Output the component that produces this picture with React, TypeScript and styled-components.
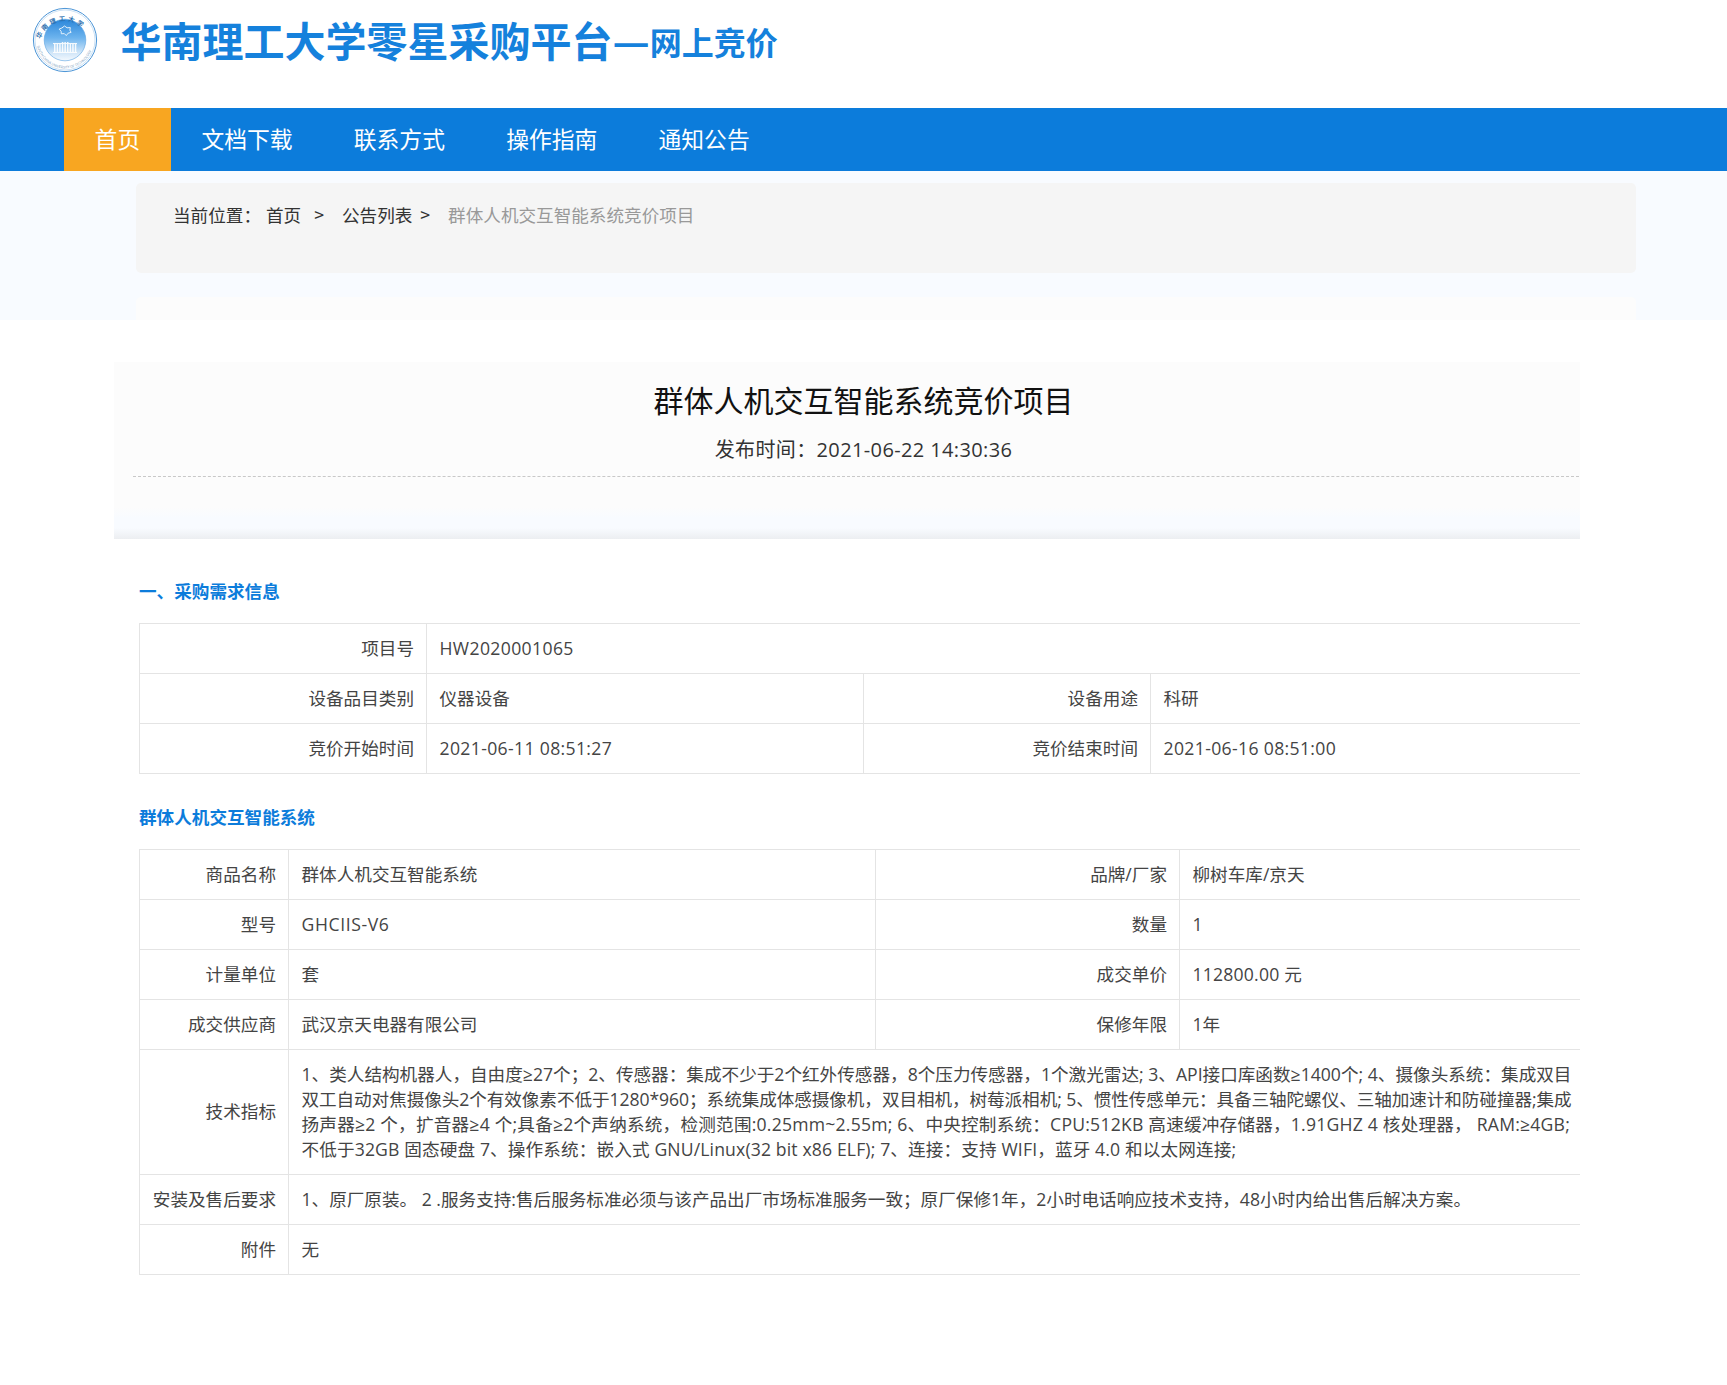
import React from 'react';
import styled, { createGlobalStyle } from 'styled-components';

const Global = createGlobalStyle`
  html, body { margin: 0; padding: 0; background: #fff; }
  body { font-family: "Noto Sans CJK SC", "Noto Sans", sans-serif; color: #333; }
  * { box-sizing: border-box; }
`;

const MIXED = `"Open Sans", "Noto Sans CJK SC", sans-serif`;

const Page = styled.div`
  width: 1727px;
  min-height: 1385px;
  overflow: hidden;
`;

const Header = styled.header`
  height: 108px;
  display: flex;
  align-items: flex-start;
  padding: 7px 0 0 31.5px;
`;

const Brand = styled.h1`
  margin: 9px 0 0 23px;
  display: flex;
  align-items: flex-end;
  height: 46px;
  font-size: 41px;
  line-height: 46px;
  font-weight: 700;
  color: #1581dc;
  white-space: nowrap;
`;

const BrandSub = styled.span`
  font-size: 32px;
  line-height: 42px;
  font-weight: 700;
`;

const Nav = styled.nav`
  height: 63px;
  background: #0c7cdb;
  display: flex;
  padding-left: 64px;
`;

const NavItem = styled.a<{ $active?: boolean }>`
  padding: 0 30.6px;
  line-height: 62px;
  font-size: 22.8px;
  color: #fff;
  background: ${(p) => (p.$active ? '#f8a621' : 'transparent')};
`;

const TopBand = styled.div`
  height: 149px;
  background: #f8fbff;
  padding: 12px 91px 0 136px;
  overflow: hidden;
`;

const Breadcrumb = styled.div`
  height: 90px;
  background: #f5f5f5;
  border-radius: 5px;
  padding: 19px 0 0 37px;
  font-size: 17.6px;
  line-height: 25px;
  color: #333;
  display: flex;
  white-space: nowrap;
`;

const Crumb = styled.span<{ $muted?: boolean }>`
  color: ${(p) => (p.$muted ? '#999' : '#333')};
`;

const Sep = styled.span<{ $left: number; $right: number }>`
  margin: 0 ${(p) => p.$right}px 0 ${(p) => p.$left}px;
`;

const GhostPanel = styled.div`
  height: 60px;
  margin-top: 24px;
  background: #fcfcfc;
  border-radius: 5px;
`;

const Main = styled.main`
  width: 1466px;
  margin: 42px 0 0 114px;
  overflow: hidden;
`;

const TitleBox = styled.section`
  height: 177px;
  padding: 17px 0 0 19px;
  background: linear-gradient(
    to bottom,
    #fcfcfc 0,
    #fcfcfc 145px,
    #f8fbff 156px,
    #f8fbff 166px,
    #eceef1 177px
  );
`;

const TitleInner = styled.div`
  width: 1461px;
  text-align: center;
  border-bottom: 1px dashed #c8c8c8;
  padding-bottom: 11px;
`;

const Title = styled.h2`
  margin: 0;
  font-size: 30px;
  line-height: 40px;
  font-weight: 400;
  color: #111;
`;

const Published = styled.div`
  margin-top: 16px;
  font-family: ${MIXED};
  font-size: 20px;
  line-height: 30px;
  letter-spacing: 0.37px;
  color: #333;
`;

const Body = styled.div`
  padding-left: 25px;
`;

const SectionHead = styled.h3<{ $top: number; $bottom: number }>`
  margin: ${(p) => p.$top}px 0 ${(p) => p.$bottom}px;
  font-size: 17.6px;
  line-height: 26px;
  font-weight: 700;
  color: #0c7cdb;
`;

const Table = styled.table`
  width: 1461px;
  border-collapse: collapse;
  table-layout: fixed;
  font-family: ${MIXED};
  font-size: 17.6px;
  line-height: 25px;
  color: #444;
`;

const Label = styled.th`
  height: 50px;
  padding: 0 12px 1px;
  border: 1px solid #e4e4e4;
  text-align: right;
  font-weight: 400;
  white-space: nowrap;
`;

const Value = styled.td<{ $track?: number }>`
  height: 50px;
  padding: 0 13px 1px 12.5px;
  border: 1px solid #e4e4e4;
  letter-spacing: ${(p) => p.$track ?? 0}px;
`;

const LongValue = styled(Value)`
  padding: 12px 13px 12px 12.5px;
`;

const SpecLine = styled.div<{ $track: number }>`
  white-space: nowrap;
  letter-spacing: ${(p) => p.$track}px;
`;

const Seal = () => (
  <svg width="66" height="66" viewBox="0 0 66 66">
    <defs>
      <linearGradient id="sealFill" x1="0" y1="0" x2="0" y2="1">
        <stop offset="0" stopColor="#2a86da" />
        <stop offset="0.45" stopColor="#6db4ee" />
        <stop offset="0.8" stopColor="#cfe5f8" />
        <stop offset="1" stopColor="#f4f9fe" />
      </linearGradient>
      <path id="sealTop" d="M7.5 36 A25.5 25.5 0 0 1 58 36" />
      <path id="sealBottom" d="M4.5 33 A28.5 28.5 0 0 0 61.5 33" />
    </defs>
    <circle cx="33" cy="33" r="31.6" fill="#fff" stroke="#4a94d6" strokeWidth="1" />
    <circle cx="33" cy="33" r="30" fill="none" stroke="#a9cdec" strokeWidth="0.6" />
    <circle cx="33" cy="33" r="20.8" fill="url(#sealFill)" stroke="#5aa3e0" strokeWidth="0.6" />
    <text fontSize="6.4" fontWeight="700" fill="#2c6fae" letterSpacing="2.4">
      <textPath href="#sealTop" startOffset="4">华南理工大学</textPath>
    </text>
    <text fontSize="3.5" fill="#7a9cbc">
      <textPath href="#sealBottom" startOffset="6">SOUTH CHINA UNIVERSITY OF TECHNOLOGY</textPath>
    </text>
    <path
      d="M32.5 19 l2.6 1.8 3.2 -.2 -.4 2.6 1.2 2.2 -3 .8 -1.8 2.4 -2 -2 -3 .2 -.2 -2.6 -2 -2 2.8 -1.2 z"
      fill="none"
      stroke="#e4f1fb"
      strokeWidth="1"
    />
    <g fill="#fff" opacity="0.9">
      <rect x="21" y="36" width="24" height="1.1" />
      <rect x="21" y="45" width="24" height="1" />
      <rect x="22" y="37" width="1.5" height="8" />
      <rect x="24.6" y="37" width="1.5" height="8" />
      <rect x="27.2" y="37" width="1.5" height="8" />
      <rect x="29.8" y="35" width="1.5" height="10" />
      <rect x="32.4" y="35" width="1.5" height="10" />
      <rect x="35" y="35" width="1.5" height="10" />
      <rect x="37.6" y="37" width="1.5" height="8" />
      <rect x="40.2" y="37" width="1.5" height="8" />
      <rect x="42.8" y="37" width="1.5" height="8" />
    </g>
  </svg>
);

const navItems = ['首页', '文档下载', '联系方式', '操作指南', '通知公告'];

const specLines = [
  { text: '1、类人结构机器人，自由度≥27个；2、传感器：集成不少于2个红外传感器，8个压力传感器，1个激光雷达; 3、API接口库函数≥1400个; 4、摄像头系统：集成双目', track: 0.01 },
  { text: '双工自动对焦摄像头2个有效像素不低于1280*960；系统集成体感摄像机，双目相机，树莓派相机; 5、惯性传感单元：具备三轴陀螺仪、三轴加速计和防碰撞器;集成', track: -0.065 },
  { text: '扬声器≥2 个，扩音器≥4 个;具备≥2个声纳系统，检测范围:0.25mm~2.55m; 6、中央控制系统：CPU:512KB 高速缓冲存储器，1.91GHZ 4 核处理器， RAM:≥4GB;', track: 0.22 },
  { text: '不低于32GB 固态硬盘 7、操作系统：嵌入式 GNU/Linux(32 bit x86 ELF); 7、连接：支持 WIFI，蓝牙 4.0 和以太网连接;', track: 0.14 },
];

export default function App() {
  return (
    <Page>
      <Global />
      <Header>
        <Seal />
        <Brand>
          华南理工大学零星采购平台—<BrandSub>网上竞价</BrandSub>
        </Brand>
      </Header>
      <Nav>
        {navItems.map((n, i) => (
          <NavItem key={n} $active={i === 0}>{n}</NavItem>
        ))}
      </Nav>
      <TopBand>
        <Breadcrumb>
          <Crumb>当前位置：</Crumb>
          <Sep $left={5} $right={0}>首页</Sep>
          <Sep $left={13} $right={18}>&gt;</Sep>
          <Crumb>公告列表</Crumb>
          <Sep $left={8} $right={18}>&gt;</Sep>
          <Crumb $muted>群体人机交互智能系统竞价项目</Crumb>
        </Breadcrumb>
        <GhostPanel />
      </TopBand>
      <Main>
        <TitleBox>
          <TitleInner>
            <Title>群体人机交互智能系统竞价项目</Title>
            <Published>发布时间：2021-06-22 14:30:36</Published>
          </TitleInner>
        </TitleBox>
        <Body>
          <SectionHead $top={39} $bottom={19}>一、采购需求信息</SectionHead>
          <Table>
            <colgroup>
              <col width="287" />
              <col width="437" />
              <col width="287" />
              <col width="450" />
            </colgroup>
            <tbody>
              <tr>
                <Label>项目号</Label>
                <Value colSpan={3} $track={0.37}>HW2020001065</Value>
              </tr>
              <tr>
                <Label>设备品目类别</Label>
                <Value>仪器设备</Value>
                <Label>设备用途</Label>
                <Value>科研</Value>
              </tr>
              <tr>
                <Label>竞价开始时间</Label>
                <Value $track={0.35}>2021-06-11 08:51:27</Value>
                <Label>竞价结束时间</Label>
                <Value $track={0.35}>2021-06-16 08:51:00</Value>
              </tr>
            </tbody>
          </Table>
          <SectionHead $top={30} $bottom={19}>群体人机交互智能系统</SectionHead>
          <Table>
            <colgroup>
              <col width="149" />
              <col width="587" />
              <col width="304" />
              <col width="421" />
            </colgroup>
            <tbody>
              <tr>
                <Label>商品名称</Label>
                <Value>群体人机交互智能系统</Value>
                <Label>品牌/厂家</Label>
                <Value>柳树车库/京天</Value>
              </tr>
              <tr>
                <Label>型号</Label>
                <Value $track={0.6}>GHCIIS-V6</Value>
                <Label>数量</Label>
                <Value>1</Value>
              </tr>
              <tr>
                <Label>计量单位</Label>
                <Value>套</Value>
                <Label>成交单价</Label>
                <Value $track={0.2}>112800.00 元</Value>
              </tr>
              <tr>
                <Label>成交供应商</Label>
                <Value>武汉京天电器有限公司</Value>
                <Label>保修年限</Label>
                <Value>1年</Value>
              </tr>
              <tr>
                <Label>技术指标</Label>
                <LongValue colSpan={3}>
                  {specLines.map((l) => (
                    <SpecLine key={l.text} $track={l.track}>{l.text}</SpecLine>
                  ))}
                </LongValue>
              </tr>
              <tr>
                <Label>安装及售后要求</Label>
                <Value colSpan={3}>1、原厂原装。 2 .服务支持:售后服务标准必须与该产品出厂市场标准服务一致；原厂保修1年，2小时电话响应技术支持，48小时内给出售后解决方案。</Value>
              </tr>
              <tr>
                <Label>附件</Label>
                <Value colSpan={3}>无</Value>
              </tr>
            </tbody>
          </Table>
        </Body>
      </Main>
    </Page>
  );
}
